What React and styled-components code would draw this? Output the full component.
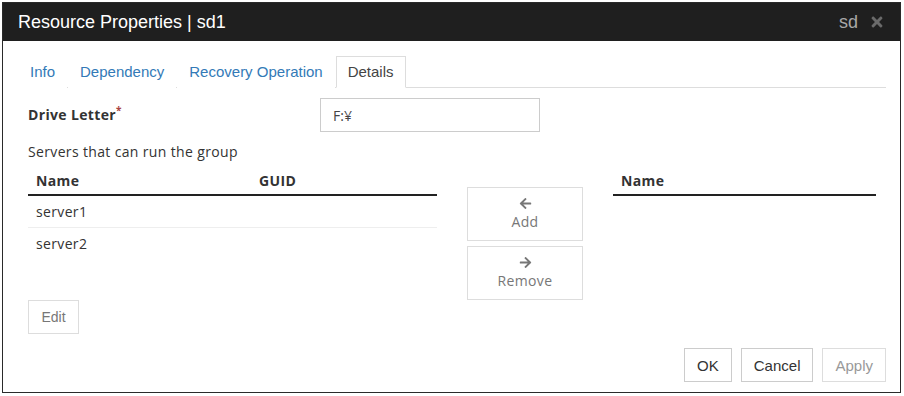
import styled, { createGlobalStyle } from "styled-components";
import { FaArrowLeft, FaArrowRight, FaTimes } from "react-icons/fa";

const GlobalStyle = createGlobalStyle`
	body {
		margin: 0;
		background: #fff;
		font-family: "Open Sans", "Noto Sans", sans-serif;
	}
`;

export default function App() {
	return (
		<>
			<GlobalStyle />
			<Page>
				<Dialog>
					<Header>
						<Title>Resource Properties | sd1</Title>
						<HeaderRight>
							<span>sd</span>
							<FaTimes />
						</HeaderRight>
					</Header>
					<Body>
						<Tabs>
							<Tab>Info</Tab>
							<Tab>Dependency</Tab>
							<Tab>Recovery Operation</Tab>
							<Tab $active>Details</Tab>
						</Tabs>
						<Content>
							<FieldRow>
								<Label>
									Drive Letter<Req>*</Req>
								</Label>
								<Input defaultValue="F:¥" />
							</FieldRow>
							<Caption>Servers that can run the group</Caption>
							<Lists>
								<Table>
									<HeadRow>
										<Cell $w="223px">Name</Cell>
										<Cell>GUID</Cell>
									</HeadRow>
									<Row>
										<Cell>server1</Cell>
									</Row>
									<Row>
										<Cell>server2</Cell>
									</Row>
								</Table>
								<Mover>
									<MoveButton>
										<FaArrowLeft />
										<span>Add</span>
									</MoveButton>
									<MoveButton>
										<FaArrowRight />
										<span>Remove</span>
									</MoveButton>
								</Mover>
								<Table>
									<HeadRow>
										<Cell>Name</Cell>
									</HeadRow>
								</Table>
							</Lists>
							<EditButton>Edit</EditButton>
						</Content>
						<Footer>
							<FootButton>OK</FootButton>
							<FootButton>Cancel</FootButton>
							<FootButton $muted>Apply</FootButton>
						</Footer>
					</Body>
				</Dialog>
			</Page>
		</>
	);
}

const Page = styled.div`
	padding: 2px 3px 2px 2px;
`;

const Dialog = styled.div`
	border: 1px solid #2a2a2a;
	height: 389px;
	display: flex;
	flex-direction: column;
	background: #fff;
`;

const Header = styled.div`
	flex-shrink: 0;
	height: 38px;
	background: #1f1f1f;
	display: flex;
	align-items: center;
	justify-content: space-between;
	padding: 0 15px 0 15px;
	font-family: "Liberation Sans", Arial, sans-serif;
`;

const Title = styled.div`
	color: #fff;
	font-size: 18px;
`;

const HeaderRight = styled.div`
	display: flex;
	align-items: center;
	gap: 11px;
	color: #a8a8a8;
	font-size: 18px;
	svg {
		color: #6a6a6a;
		font-size: 16px;
	}
`;

const Body = styled.div`
	flex: 1;
	display: flex;
	flex-direction: column;
	padding: 15px 14px 10px 15px;
`;

const Tabs = styled.div`
	display: flex;
	border-bottom: 1px solid #ddd;
	height: 31px;
	font-family: "Liberation Sans", Arial, sans-serif;
	font-size: 15px;
`;

const Tab = styled.div`
	padding: 0 11px;
	line-height: 30px;
	color: ${(p) => (p.$active ? "#444" : "#337ab7")};
	border: 1px solid ${(p) => (p.$active ? "#ddd" : "transparent")};
	border-bottom-color: ${(p) => (p.$active ? "#fff" : "transparent")};
	background: #fff;
	margin-bottom: -1px;
	margin-right: 1px;
`;

const Content = styled.div`
	padding: 10px 10px 0;
	flex: 1;
	font-size: 14px;
	letter-spacing: 0.35px;
	color: #333;
`;

const FieldRow = styled.div`
	display: flex;
	align-items: center;
	height: 34px;
`;

const Label = styled.div`
	width: 292px;
	font-weight: bold;
	margin-top: -3px;
`;

const Req = styled.sup`
	color: #a94442;
	font-size: 10px;
`;

const Input = styled.input`
	width: 220px;
	height: 34px;
	box-sizing: border-box;
	border: 1px solid #ccc;
	padding: 0 12px;
	font-family: "Open Sans", sans-serif;
	font-size: 14px;
	color: #444;
`;

const Caption = styled.div`
	margin-top: 8px;
	height: 24px;
	line-height: 24px;
`;

const Lists = styled.div`
	display: grid;
	grid-template-columns: 409px 116px 263px;
	column-gap: 30px;
	margin-top: 3px;
`;

const Table = styled.div`
	display: flex;
	flex-direction: column;
`;

const HeadRow = styled.div`
	display: flex;
	height: 27px;
	align-items: center;
	border-bottom: 2px solid #222;
	font-weight: bold;
`;

const Row = styled.div`
	display: flex;
	height: 31px;
	align-items: center;
	& + & {
		border-top: 1px solid #eee;
	}
`;

const Cell = styled.div`
	box-sizing: border-box;
	padding-left: 8px;
	width: ${(p) => p.$w || "auto"};
`;

const Mover = styled.div`
	display: flex;
	flex-direction: column;
	gap: 5px;
	margin-top: 20px;
`;

const MoveButton = styled.div`
	height: 54px;
	box-sizing: border-box;
	border: 1px solid #ddd;
	display: flex;
	flex-direction: column;
	align-items: center;
	justify-content: center;
	gap: 2px;
	color: #777;
	svg {
		width: 13px;
		height: 13px;
	}
`;

const EditButton = styled.div`
	width: 51px;
	height: 34px;
	box-sizing: border-box;
	border: 1px solid #ddd;
	display: flex;
	align-items: center;
	justify-content: center;
	color: #777;
	font-family: "Liberation Sans", Arial, sans-serif;
	font-size: 14px;
	letter-spacing: 0;
`;

const Footer = styled.div`
	display: flex;
	justify-content: flex-end;
	gap: 9px;
	font-family: "Liberation Sans", Arial, sans-serif;
	font-size: 15px;
`;

const FootButton = styled.div`
	height: 34px;
	box-sizing: border-box;
	padding: 0 12px;
	border: 1px solid ${(p) => (p.$muted ? "#ddd" : "#ccc")};
	color: ${(p) => (p.$muted ? "#999" : "#333")};
	display: flex;
	align-items: center;
`;
